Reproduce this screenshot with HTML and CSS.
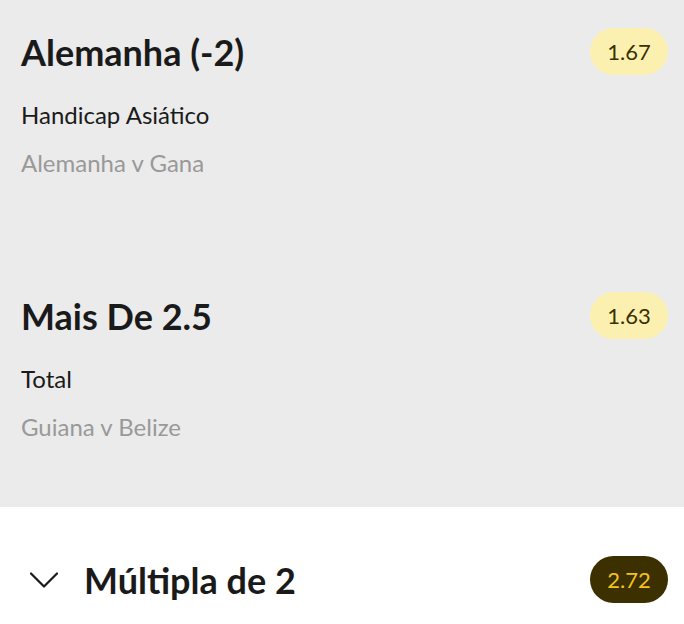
FILE: index.html
```html
<!DOCTYPE html>
<html lang="pt">
<head>
    <meta charset="UTF-8">
    <meta name="viewport" content="width=device-width, initial-scale=1.0">
    <link rel="stylesheet" href="styles.css">
    <title>Boletim</title>
</head>
<body>
    <div class="bets">
        <div class="bet">
            <div class="bet-head">
                <h2 class="bet-title">Alemanha (-2)</h2>
                <span class="odds">1.67</span>
            </div>
            <p class="market">Handicap Asiático</p>
            <p class="event">Alemanha v Gana</p>
        </div>
        <div class="bet">
            <div class="bet-head">
                <h2 class="bet-title">Mais De 2.5</h2>
                <span class="odds">1.63</span>
            </div>
            <p class="market">Total</p>
            <p class="event">Guiana v Belize</p>
        </div>
    </div>
    <div class="multiple">
        <div class="multiple-left">
            <svg class="chevron" width="28" height="16" viewBox="0 0 28 16">
                <path d="M1 1.5 L14 14.5 L27 1.5" fill="none" stroke="#1a1a1a" stroke-width="2.2" stroke-linecap="round" stroke-linejoin="round"/>
            </svg>
            <h2 class="bet-title">Múltipla de 2</h2>
        </div>
        <span class="odds odds-dark">2.72</span>
    </div>
</body>
</html>
```

FILE: styles.css
```css
body {
    margin: 0;
    background-color: #ffffff;
    font-family: Lato, "Noto Sans", sans-serif;
    color: #1a1a1a;
}
.bets {
    background-color: #ebebeb;
}
.bet {
    padding: 28px 16px 66px 21px;
}
.bet + .bet {
    margin-top: 21px;
}
.bet-head {
    display: flex;
    justify-content: space-between;
    align-items: center;
    height: 47px;
}
.bet-title {
    margin: 0;
    font-size: 36px;
    line-height: 44px;
    font-weight: 700;
    color: #1a1a1a;
}
.odds {
    display: flex;
    align-items: center;
    justify-content: center;
    min-width: 78px;
    height: 47px;
    border-radius: 24px;
    background-color: #fcf0b1;
    color: #3a3000;
    font-size: 22px;
}
.market {
    margin: 26px 0 0;
    font-size: 24px;
    line-height: 28px;
    color: #1a1a1a;
}
.event {
    margin: 20px 0 0;
    font-size: 24px;
    line-height: 28px;
    color: #999999;
}
.multiple {
    display: flex;
    justify-content: space-between;
    align-items: center;
    padding: 49px 16px 30px 30px;
}
.multiple-left {
    display: flex;
    align-items: center;
    gap: 26px;
}
.chevron {
    display: block;
}
.odds-dark {
    background-color: #3c3000;
    color: #f3c31c;
}
```
